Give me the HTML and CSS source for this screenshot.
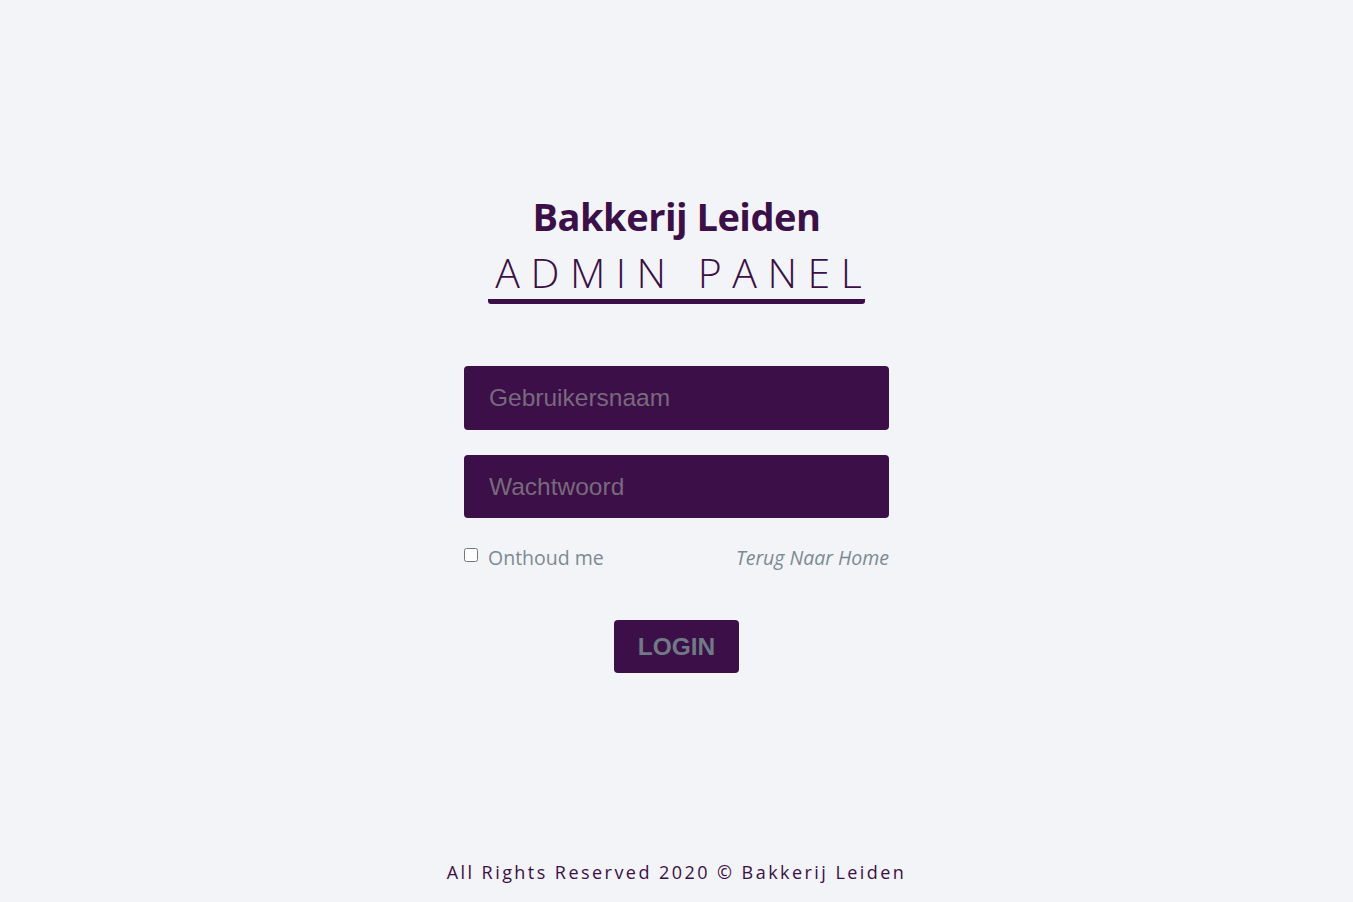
FILE: index.html
```html
<!DOCTYPE html>
<html lang="nl">
<head>
<meta charset="utf-8">
<title>Admin Panel - Bakkerij Leiden</title>
<link rel="stylesheet" href="styles.css">
</head>
<body>
<div class="page">
  <main class="login">
    <header class="brand">
      <h1 class="brand-name">Bakkerij Leiden</h1>
      <h2 class="brand-sub">ADMIN PANE<span class="last">L</span></h2>
    </header>
    <form class="form">
      <input class="field" type="text" placeholder="Gebruikersnaam">
      <input class="field" type="password" placeholder="Wachtwoord">
      <div class="options">
        <label class="remember"><input type="checkbox" class="check"> Onthoud me</label>
        <a class="home-link" href="#">Terug Naar Home</a>
      </div>
      <button class="btn" type="button">LOGIN</button>
    </form>
  </main>
  <footer class="footer">All Rights Reserved 2020 © Bakkerij Leiden</footer>
</div>
</body>
</html>
```
FILE: styles.css
```css
* { box-sizing: border-box; }
html, body { margin: 0; padding: 0; }
body {
  background: #f3f4f8;
  font-family: "Open Sans", "Noto Sans", sans-serif;
  color: #3b0f47;
}
.page {
  height: 902px;
  display: flex;
  flex-direction: column;
  align-items: center;
}
.login {
  width: 425px;
  padding-top: 192px;
  display: flex;
  flex-direction: column;
  align-items: center;
}
.brand { display: flex; flex-direction: column; align-items: center; }
.brand-name {
  margin: 0;
  font-size: 38px;
  font-weight: 700;
  line-height: 48px;
  letter-spacing: -0.5px;
  color: #3b0f47;
}
.brand-sub {
  margin: 8px 0 0;
  font-size: 41px;
  font-weight: 300;
  line-height: 48px;
  letter-spacing: 10.5px;
  padding: 0 0 3px 7px;
  color: #3b0f47;
  border-bottom: 5px solid #3b0f47;
  border-radius: 3px;
}
.brand-sub .last { letter-spacing: 3px; }
.form {
  width: 425px;
  margin-top: 62px;
  display: flex;
  flex-direction: column;
}
.field {
  height: 64px;
  border: none;
  border-radius: 4px;
  background: #3c0f48;
  padding: 0 25px;
  font-family: "Liberation Sans", Arial, sans-serif;
  font-size: 24.5px;
  color: #fff;
  margin-bottom: 25px;
}
.field + .field { height: 63px; margin-bottom: 26px; }
.field::placeholder { color: #776a7c; }
.options {
  display: flex;
  justify-content: space-between;
  align-items: center;
  font-size: 19.5px;
  color: #7b8a92;
}
.remember { display: flex; align-items: center; gap: 10px; }
.check { margin: 0; width: 14px; height: 14px; position: relative; top: -3px; }
.home-link { color: #7b8a92; font-style: italic; text-decoration: none; }
.btn {
  align-self: center;
  margin-top: 49px;
  width: 125px;
  height: 53px;
  border: none;
  border-radius: 4px;
  background: #3c0f48;
  color: #6e7b86;
  font-family: "Liberation Sans", Arial, sans-serif;
  font-weight: 700;
  font-size: 24.5px;
}
.footer {
  margin-top: auto;
  margin-bottom: 18px;
  font-size: 18px;
  letter-spacing: 2.45px;
  color: #3b0f47;
}
```
